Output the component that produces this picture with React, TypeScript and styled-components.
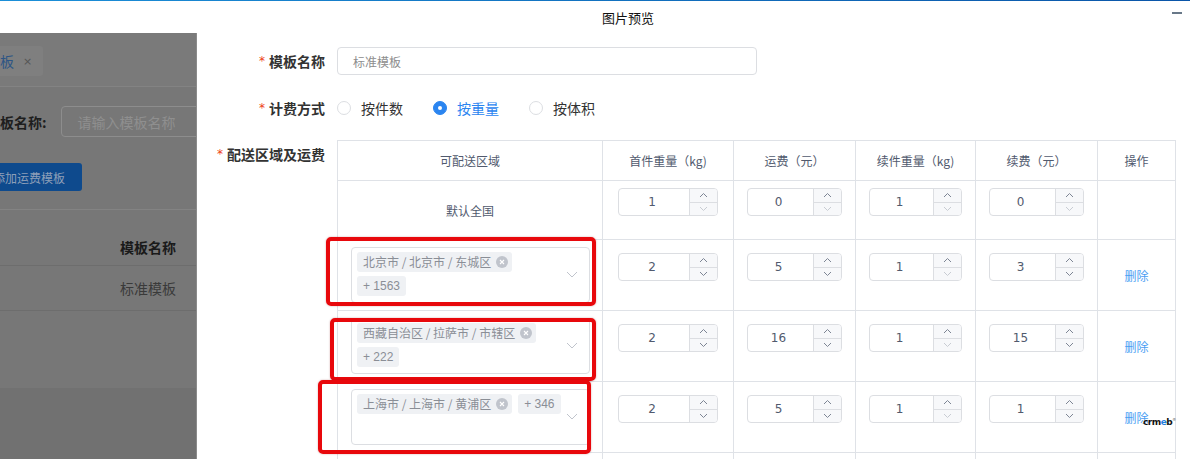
import React from 'react';
import styled, { createGlobalStyle } from 'styled-components';

const Global = createGlobalStyle`
  html, body { margin: 0; padding: 0; width: 1190px; height: 459px; overflow: hidden; background: #fff; }
  body { font-family: "Noto Sans CJK SC", "Noto Sans", sans-serif; }
  * { box-sizing: border-box; }
`;

const Page = styled.div`
  position: relative;
  width: 1190px;
  height: 459px;
  display: flex;
  flex-direction: column;
  overflow: hidden;
  background: #fff;
`;

const TitleBar = styled.div`
  position: relative;
  flex: none;
  height: 33px;
  display: flex;
  align-items: center;
  justify-content: center;
  padding-left: 66px;
  border-top: 1px solid transparent;
  border-image: linear-gradient(90deg, #1b8fd8, #0a55a8) 1;
  font-size: 13px;
  color: #111;
  line-height: 1;
`;

const MinButton = styled.span`
  position: absolute;
  right: 8px;
  top: 11px;
  width: 10px;
  height: 2px;
  background: #687888;
`;

const Body = styled.div`
  flex: 1;
  min-height: 0;
  display: flex;
`;

/* ---------- dimmed page on the left ---------- */
const DimPanel = styled.div`
  flex: none;
  width: 197px;
  display: flex;
  flex-direction: column;
  overflow: hidden;
  background: #777;
  border-right: 1px solid #8b8b8b;
`;

const DimTabs = styled.div`
  flex: none;
  height: 54px;
  padding-top: 13px;
  background: #7a7a7a;
  border-bottom: 1px solid #838383;
  white-space: nowrap;
`;

const DimTab = styled.div`
  display: inline-flex;
  align-items: center;
  gap: 9px;
  height: 30px;
  margin-left: -52px;
  padding: 0 11px 0 10px;
  background: #7f7f7f;
  border-radius: 3px;
  font-size: 14px;
  color: #2d5585;
`;

const DimClose = styled.span`
  font-size: 11px;
  color: #555;
  font-family: "DejaVu Sans", sans-serif;
`;

const DimCard = styled.div`
  flex: none;
  padding: 19px 0 18px;
  border-bottom: 1px solid #838383;
  white-space: nowrap;
`;

const DimSearch = styled.div`
  display: flex;
  align-items: center;
  gap: 14px;
  margin-left: -14px;
  height: 31px;
`;

const DimLabel = styled.span`
  flex: none;
  font-size: 14px;
  font-weight: 700;
  color: #1e1e1e;
`;

const DimInput = styled.div`
  flex: none;
  width: 200px;
  height: 31px;
  padding-left: 16px;
  display: flex;
  align-items: center;
  border: 1px solid #8d8d8d;
  border-radius: 4px;
  font-size: 14px;
  color: #8f8f8f;
`;

const DimButton = styled.div`
  display: inline-flex;
  align-items: center;
  height: 28px;
  margin: 26px 0 0 -24px;
  padding: 0 17px;
  background: #0e4a8d;
  border-radius: 3px;
  font-size: 12px;
  color: #8d9fb8;
`;

const DimGap = styled.div`
  flex: none;
  height: 18px;
`;

const DimRow = styled.div<{ $head?: boolean; $h: number }>`
  flex: none;
  height: ${p => p.$h}px;
  display: flex;
  align-items: center;
  padding-left: 120px;
  border-bottom: 1px solid #6d6d6d;
  font-size: 14px;
  font-weight: ${p => (p.$head ? 700 : 400)};
  color: ${p => (p.$head ? '#1a1a1a' : '#3a3a3a')};
`;

const DimFiller = styled.div`
  flex: none;
  height: 77px;
`;

const DimOutside = styled.div`
  flex: 1;
  background: #717171;
`;

/* ---------- form panel ---------- */
const FormPanel = styled.div`
  flex: 1;
  min-width: 0;
  padding: 14px 14px 0 16px;
  display: flex;
  flex-direction: column;
`;

const FormItem = styled.div<{ $mb: number }>`
  display: flex;
  align-items: flex-start;
  margin-bottom: ${p => p.$mb}px;
`;

const Label = styled.div`
  flex: none;
  width: 124px;
  height: 28px;
  padding-right: 12px;
  display: flex;
  align-items: center;
  justify-content: flex-end;
  white-space: nowrap;
  font-size: 14px;
  font-weight: 700;
  color: #333;
`;

const Star = styled.span`
  color: #ed4014;
  margin-right: 4px;
  font-family: "DejaVu Sans", sans-serif;
  font-weight: 400;
  font-size: 12px;
  line-height: 1;
`;

const TextInput = styled.div`
  width: 420px;
  height: 28px;
  padding: 0 15px;
  display: flex;
  align-items: center;
  border: 1px solid #dcdee2;
  border-radius: 4px;
  font-size: 12px;
  color: #8d8d8d;
`;

const RadioGroup = styled.div`
  display: flex;
  align-items: center;
  height: 28px;
`;

const RadioItem = styled.label<{ $checked?: boolean }>`
  display: flex;
  align-items: center;
  gap: 10px;
  margin-right: 30px;
  font-size: 14px;
  color: ${p => (p.$checked ? '#2b85f0' : '#333')};
`;

const RadioCircle = styled.span<{ $checked?: boolean }>`
  position: relative;
  width: 14px;
  height: 14px;
  border-radius: 50%;
  border: 1px solid ${p => (p.$checked ? '#2b85f0' : '#dcdee2')};
  background: ${p => (p.$checked ? '#2b85f0' : '#fff')};
  &::after {
    content: '';
    display: ${p => (p.$checked ? 'block' : 'none')};
    position: absolute;
    left: 50%;
    top: 50%;
    width: 4px;
    height: 4px;
    margin: -2px 0 0 -2px;
    border-radius: 50%;
    background: #fff;
  }
`;

const Table = styled.table`
  flex: 1;
  width: 100%;
  table-layout: fixed;
  border-collapse: collapse;
  border: 1px solid #dfe2e7;
`;

const Th = styled.th`
  height: 40px;
  padding: 0;
  border: 1px solid #dfe2e7;
  font-size: 12px;
  font-weight: 400;
  color: #515a6e;
  text-align: center;
`;

const Td = styled.td`
  padding: 7px 13px;
  border: 1px solid #dfe2e7;
  vertical-align: middle;
  text-align: center;
  font-size: 12px;
  color: #515a6e;
`;

const Field = styled.div`
  display: flex;
  justify-content: center;
  padding-bottom: 16px;
`;

const NumberBox = styled.div`
  display: flex;
  width: 100px;
  height: 28px;
  border: 1px solid #dcdee2;
  border-radius: 4px;
  overflow: hidden;
`;

const NumberValue = styled.div`
  flex: 1;
  display: flex;
  align-items: center;
  justify-content: center;
  padding-right: 4px;
  font-family: "DejaVu Sans", sans-serif;
  font-size: 12px;
  color: #515a6e;
`;

const Stepper = styled.div`
  flex: none;
  width: 28px;
  display: flex;
  flex-direction: column;
  border-left: 1px solid #dcdee2;
  background: #f7f8fa;
`;

const StepHalf = styled.div<{ $top?: boolean }>`
  flex: 1;
  display: flex;
  align-items: center;
  justify-content: center;
  border-bottom: ${p => (p.$top ? '1px solid #dcdee2' : 'none')};
`;

const SelectBox = styled.div`
  position: relative;
  width: 239px;
  height: 56px;
  padding: 4px 26px 4px 5px;
  display: flex;
  flex-wrap: wrap;
  align-content: flex-start;
  gap: 4px 6px;
  border: 1px solid #dcdee2;
  border-radius: 4px;
  text-align: left;
`;

const Tag = styled.span<{ $count?: boolean }>`
  display: inline-flex;
  align-items: center;
  gap: 5px;
  height: 20px;
  padding: 0 6px;
  background: #eff1f4;
  border-radius: 3px;
  font-family: ${p => (p.$count ? '"Liberation Sans", Arial, sans-serif' : 'inherit')};
  font-size: 12px;
  line-height: 20px;
  color: #8a8e96;
  white-space: nowrap;
`;

const TagClose = styled.span`
  display: inline-flex;
  align-items: center;
  justify-content: center;
  width: 12px;
  height: 12px;
  margin-right: -2px;
  border-radius: 50%;
  background: #c0c4cc;
`;

const SelectArrow = styled.span`
  position: absolute;
  right: 11px;
  top: 50%;
  margin-top: -4px;
  display: flex;
`;

const DeleteLink = styled.span`
  font-size: 12px;
  color: #4a9ef3;
`;

const RedBox = styled.div`
  position: absolute;
  border: 4px solid #e8080c;
  border-radius: 5px;
  box-shadow: 0 0 2px rgba(120, 0, 0, 0.35);
  pointer-events: none;
`;

const Logo = styled.div`
  position: absolute;
  left: 1143px;
  top: 418px;
  font-family: "DejaVu Sans", sans-serif;
  font-weight: 700;
  font-size: 9px;
  letter-spacing: -0.5px;
  color: #111;
  line-height: 1;
  b { color: #1f7fe0; }
  sup { font-size: 4px; font-weight: 400; color: #555; }
`;

const Chevron: React.FC<{ up?: boolean; disabled?: boolean }> = ({ up, disabled }) => (
  <svg width="9" height="6" viewBox="0 0 9 6">
    <path
      d={up ? 'M1 5 L4.5 1.5 L8 5' : 'M1 1 L4.5 4.5 L8 1'}
      fill="none"
      stroke={disabled ? '#c8ccd3' : '#7d8594'}
      strokeWidth="1"
    />
  </svg>
);

const NumberInput: React.FC<{ value: number; min: number }> = ({ value, min }) => (
  <Field>
    <NumberBox>
      <NumberValue>{value}</NumberValue>
      <Stepper>
        <StepHalf $top>
          <Chevron up />
        </StepHalf>
        <StepHalf>
          <Chevron disabled={value <= min} />
        </StepHalf>
      </Stepper>
    </NumberBox>
  </Field>
);

const RegionSelect: React.FC<{ region: string; more: number }> = ({ region, more }) => (
  <SelectBox>
    <Tag>
      {region}
      <TagClose>
        <svg width="6" height="6" viewBox="0 0 6 6">
          <path d="M1 1 L5 5 M5 1 L1 5" stroke="#fff" strokeWidth="1.1" />
        </svg>
      </TagClose>
    </Tag>
    <Tag $count>+ {more}</Tag>
    <SelectArrow>
      <svg width="12" height="7" viewBox="0 0 12 7">
        <path d="M1 1 L6 6 L11 1" fill="none" stroke="#c0c4cc" strokeWidth="1" />
      </svg>
    </SelectArrow>
  </SelectBox>
);

const rows = [
  { region: '北京市 / 北京市 / 东城区', more: 1563, first: 2, fee: 5, next: 1, nextFee: 3 },
  { region: '西藏自治区 / 拉萨市 / 市辖区', more: 222, first: 2, fee: 16, next: 1, nextFee: 15 },
  { region: '上海市 / 上海市 / 黄浦区', more: 346, first: 2, fee: 5, next: 1, nextFee: 1 },
  { region: '广东省 / 广州市 / 荔湾区', more: 180, first: 2, fee: 6, next: 1, nextFee: 2 },
];

const redBoxes = [
  { left: 326, top: 237, width: 270, height: 69 },
  { left: 330, top: 318, width: 266, height: 63 },
  { left: 318, top: 380, width: 273, height: 74 },
];

export default function App() {
  return (
    <Page>
      <Global />
      <TitleBar>
        图片预览
        <MinButton />
      </TitleBar>
      <Body>
        <DimPanel>
          <DimTabs>
            <DimTab>
              运费模板<DimClose>×</DimClose>
            </DimTab>
          </DimTabs>
          <DimCard>
            <DimSearch>
              <DimLabel>模板名称:</DimLabel>
              <DimInput>请输入模板名称</DimInput>
            </DimSearch>
            <DimButton>添加运费模板</DimButton>
          </DimCard>
          <DimGap />
          <DimRow $head $h={38}>模板名称</DimRow>
          <DimRow $h={45}>标准模板</DimRow>
          <DimFiller />
          <DimOutside />
        </DimPanel>

        <FormPanel>
          <FormItem $mb={19}>
            <Label>
              <Star>*</Star>模板名称
            </Label>
            <TextInput>标准模板</TextInput>
          </FormItem>
          <FormItem $mb={18}>
            <Label>
              <Star>*</Star>计费方式
            </Label>
            <RadioGroup>
              <RadioItem>
                <RadioCircle />
                按件数
              </RadioItem>
              <RadioItem $checked>
                <RadioCircle $checked />
                按重量
              </RadioItem>
              <RadioItem>
                <RadioCircle />
                按体积
              </RadioItem>
            </RadioGroup>
          </FormItem>
          <FormItem $mb={0}>
            <Label>
              <Star>*</Star>配送区域及运费
            </Label>
            <Table>
              <colgroup>
                <col style={{ width: 265 }} />
                <col style={{ width: 131 }} />
                <col style={{ width: 122 }} />
                <col style={{ width: 120 }} />
                <col style={{ width: 122 }} />
                <col />
              </colgroup>
              <thead>
                <tr>
                  <Th>可配送区域</Th>
                  <Th>首件重量（kg)</Th>
                  <Th>运费（元）</Th>
                  <Th>续件重量（kg)</Th>
                  <Th>续费（元）</Th>
                  <Th>操作</Th>
                </tr>
              </thead>
              <tbody>
                <tr>
                  <Td>默认全国</Td>
                  <Td>
                    <NumberInput value={1} min={1} />
                  </Td>
                  <Td>
                    <NumberInput value={0} min={0} />
                  </Td>
                  <Td>
                    <NumberInput value={1} min={1} />
                  </Td>
                  <Td>
                    <NumberInput value={0} min={0} />
                  </Td>
                  <Td />
                </tr>
                {rows.map(r => (
                  <tr key={r.region}>
                    <Td>
                      <RegionSelect region={r.region} more={r.more} />
                    </Td>
                    <Td>
                      <NumberInput value={r.first} min={1} />
                    </Td>
                    <Td>
                      <NumberInput value={r.fee} min={0} />
                    </Td>
                    <Td>
                      <NumberInput value={r.next} min={1} />
                    </Td>
                    <Td>
                      <NumberInput value={r.nextFee} min={0} />
                    </Td>
                    <Td>
                      <DeleteLink>删除</DeleteLink>
                    </Td>
                  </tr>
                ))}
              </tbody>
            </Table>
          </FormItem>
        </FormPanel>
      </Body>

      {redBoxes.map((b, i) => (
        <RedBox key={i} style={{ left: b.left, top: b.top, width: b.width, height: b.height }} />
      ))}
      <Logo>
        crm<b>e</b>b<sup>®</sup>
      </Logo>
    </Page>
  );
}
